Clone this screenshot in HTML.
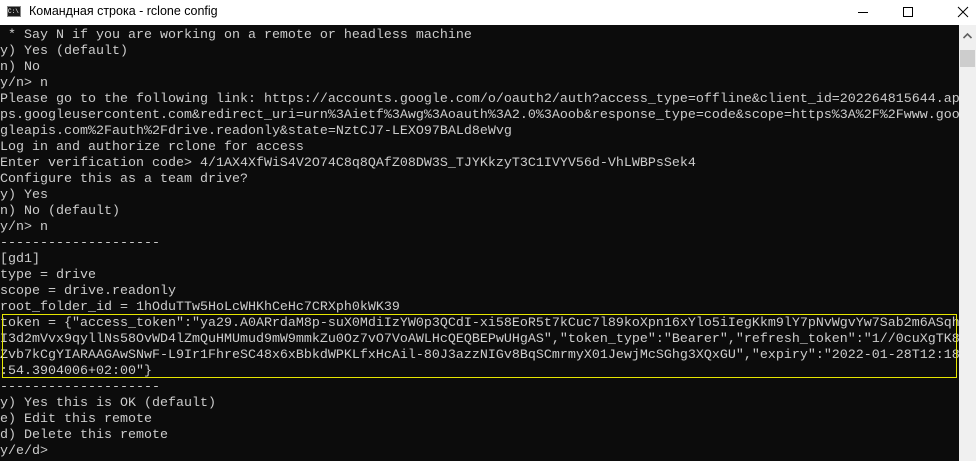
<!DOCTYPE html>
<html><head><meta charset="utf-8"><style>
body{margin:0;width:976px;height:461px;overflow:hidden;background:#fff;position:relative;font-family:"Liberation Sans","Noto Sans CJK SC",sans-serif}
#title{position:absolute;left:0;top:0;width:976px;height:25px;background:#fff}
#title .t{position:absolute;left:29px;top:4px;font-size:12.5px;color:#000}
#icon{position:absolute;left:7px;top:6px;width:14px;height:11px;background:#1a1a1a;border:1px solid #888;box-sizing:border-box;color:#fff;font-size:6px;line-height:9px;font-family:"Liberation Mono",monospace}
#con{position:absolute;left:0;top:25px;width:959px;height:436px;background:#0c0c0c;overflow:hidden}
pre{margin:0;font-family:"Liberation Mono",monospace;font-size:13.33px;line-height:16px;color:#cccccc;white-space:pre;position:absolute;left:0;top:3px}
#box{position:absolute;left:2px;top:289px;width:955px;height:64px;border:1px solid #e6e600;box-sizing:border-box}
#sb{position:absolute;left:959px;top:25px;width:17px;height:436px;background:#f0f0f0}
#thumb{position:absolute;left:1px;top:25px;width:15px;height:17px;background:#cdcdcd}
</style></head><body>
<div id="title"><div id="icon">C:\</div><span class="t">Командная строка - rclone  config</span>
<svg style="position:absolute;left:850px;top:3px" width="120" height="20"><line x1="8" y1="9.5" x2="18" y2="9.5" stroke="#000"/><rect x="53.5" y="4.5" width="9" height="9" fill="none" stroke="#000"/><path d="M108 4L118 14M118 4L108 14" stroke="#000"/></svg></div>
<div id="con"><pre> * Say N if you are working on a remote or headless machine
y) Yes (default)
n) No
y/n> n
Please go to the following link: https://accounts.google.com/o/oauth2/auth?access_type=offline&amp;client_id=202264815644.ap
ps.googleusercontent.com&amp;redirect_uri=urn%3Aietf%3Awg%3Aoauth%3A2.0%3Aoob&amp;response_type=code&amp;scope=https%3A%2F%2Fwww.goo
gleapis.com%2Fauth%2Fdrive.readonly&amp;state=NztCJ7-LEXO97BALd8eWvg
Log in and authorize rclone for access
Enter verification code&gt; 4/1AX4XfWiS4V2O74C8q8QAfZ08DW3S_TJYKkzyT3C1IVYV56d-VhLWBPsSek4
Configure this as a team drive?
y) Yes
n) No (default)
y/n&gt; n
--------------------
[gd1]
type = drive
scope = drive.readonly
root_folder_id = 1hOduTTw5HoLcWHKhCeHc7CRXph0kWK39
token = {"access_token":"ya29.A0ARrdaM8p-suX0MdiIzYW0p3QCdI-xi58EoR5t7kCuc7l89koXpn16xYlo5iIegKkm9lY7pNvWgvYw7Sab2m6ASqh
I3d2mVvx9qyllNs58OvWD4lZmQuHMUmud9mW9mmkZu0Oz7vO7VoAWLHcQEQBEPwUHgAS","token_type":"Bearer","refresh_token":"1//0cuXgTK8
Zvb7kCgYIARAAGAwSNwF-L9Ir1FhreSC48x6xBbkdWPKLfxHcAil-80J3azzNIGv8BqSCmrmyX01JewjMcSGhg3XQxGU","expiry":"2022-01-28T12:18
:54.3904006+02:00"}
--------------------
y) Yes this is OK (default)
e) Edit this remote
d) Delete this remote
y/e/d&gt;</pre><div id="box"></div></div>
<div id="sb"><svg style="position:absolute;left:4px;top:8px" width="9" height="6"><path d="M0.5 5L4.5 1L8.5 5" stroke="#606060" stroke-width="1.6" fill="none"/></svg><div id="thumb"></div></div>
</body></html>
